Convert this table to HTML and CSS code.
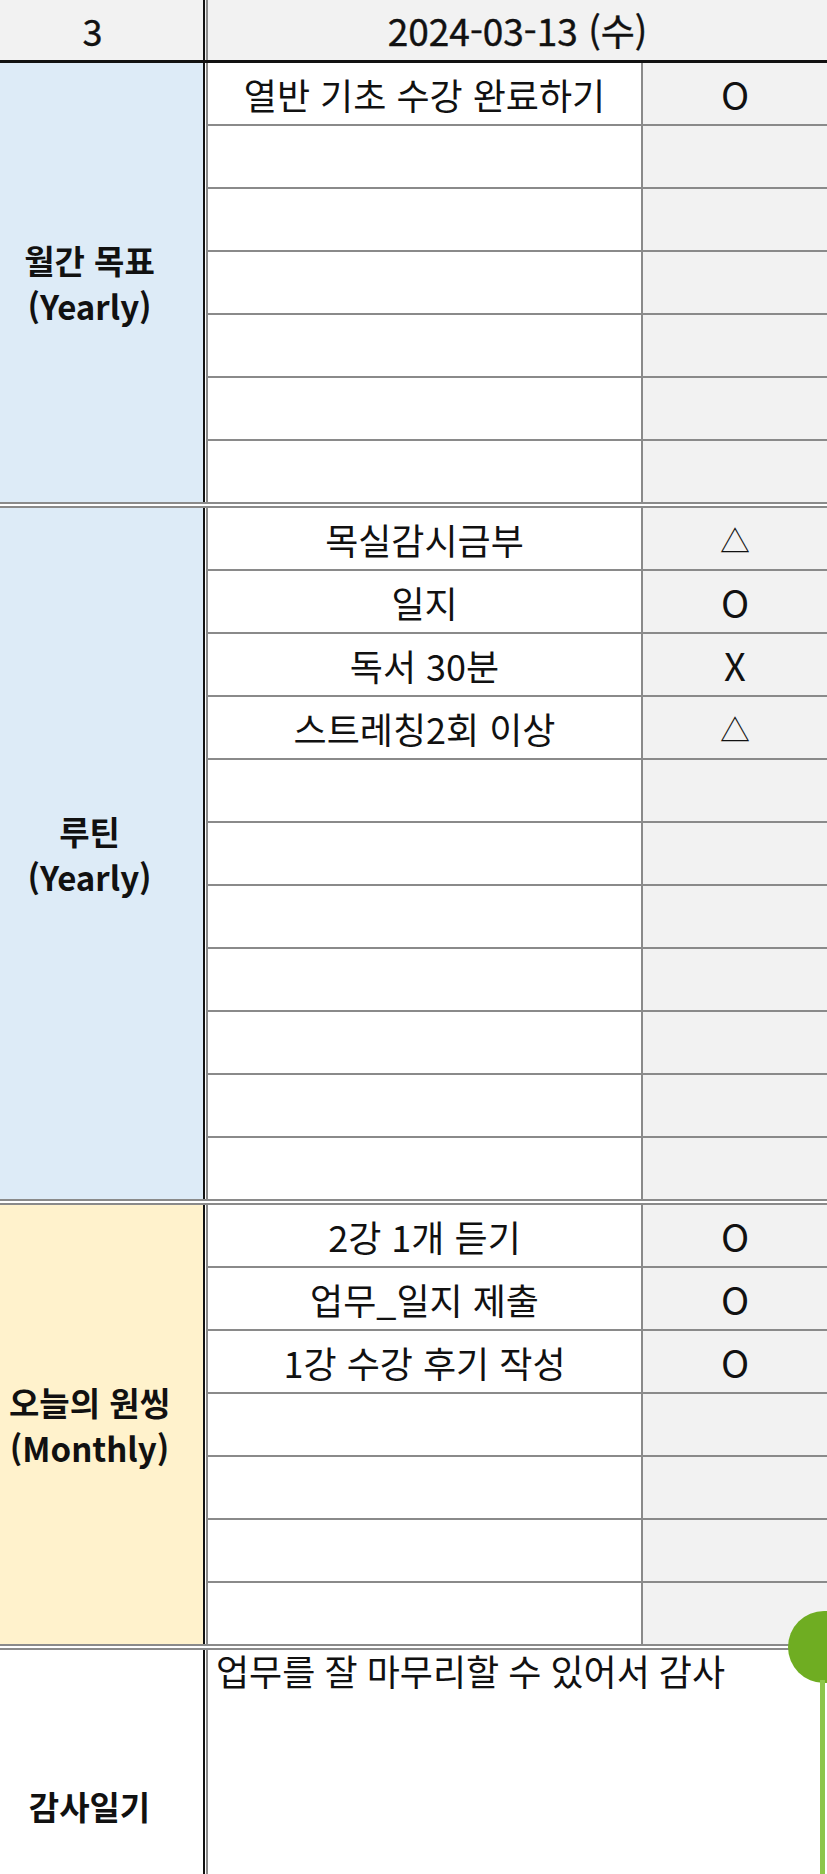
FILE: index.html
```html
<!DOCTYPE html>
<html lang="ko">
<head>
<meta charset="utf-8">
<title>2024-03-13</title>
<link rel="stylesheet" href="styles.css">
</head>
<body>
<div class="sheet">
  <div class="header">
    <div class="label head-label">3</div>
    <div class="date">2024-03-13 (수)</div>
  </div>

  <section class="block blue">
    <div class="label">월간 목표<br>(Yearly)</div>
    <div class="rows">
      <div class="row"><div class="task">열반 기초 수강 완료하기</div><div class="mark">O</div></div>
      <div class="row"><div class="task"></div><div class="mark"></div></div>
      <div class="row"><div class="task"></div><div class="mark"></div></div>
      <div class="row"><div class="task"></div><div class="mark"></div></div>
      <div class="row"><div class="task"></div><div class="mark"></div></div>
      <div class="row"><div class="task"></div><div class="mark"></div></div>
      <div class="row"><div class="task"></div><div class="mark"></div></div>
    </div>
  </section>

  <section class="block blue">
    <div class="label">루틴<br>(Yearly)</div>
    <div class="rows">
      <div class="row"><div class="task">목실감시금부</div><div class="mark tri">△</div></div>
      <div class="row"><div class="task">일지</div><div class="mark">O</div></div>
      <div class="row"><div class="task">독서 30분</div><div class="mark">X</div></div>
      <div class="row"><div class="task">스트레칭2회 이상</div><div class="mark tri">△</div></div>
      <div class="row"><div class="task"></div><div class="mark"></div></div>
      <div class="row"><div class="task"></div><div class="mark"></div></div>
      <div class="row"><div class="task"></div><div class="mark"></div></div>
      <div class="row"><div class="task"></div><div class="mark"></div></div>
      <div class="row"><div class="task"></div><div class="mark"></div></div>
      <div class="row"><div class="task"></div><div class="mark"></div></div>
      <div class="row"><div class="task"></div><div class="mark"></div></div>
    </div>
  </section>

  <section class="block yellow">
    <div class="label">오늘의 원씽<br>(Monthly)</div>
    <div class="rows">
      <div class="row"><div class="task">2강 1개 듣기</div><div class="mark">O</div></div>
      <div class="row"><div class="task">업무_일지 제출</div><div class="mark">O</div></div>
      <div class="row"><div class="task">1강 수강 후기 작성</div><div class="mark">O</div></div>
      <div class="row"><div class="task"></div><div class="mark"></div></div>
      <div class="row"><div class="task"></div><div class="mark"></div></div>
      <div class="row"><div class="task"></div><div class="mark"></div></div>
      <div class="row"><div class="task"></div><div class="mark"></div></div>
    </div>
  </section>

  <section class="block diary">
    <div class="label">감사일기</div>
    <div class="note">업무를 잘 마무리할 수 있어서 감사</div>
  </section>

  <div class="handle-dot"></div>
  <div class="handle-line"></div>
</div>
</body>
</html>
```

FILE: styles.css
```css
* { box-sizing: border-box; }

html, body {
  margin: 0;
  padding: 0;
  background: #ffffff;
}

body {
  font-family: "Noto Sans CJK KR", "Noto Sans", sans-serif;
  color: #111111;
  overflow: hidden;
}

.sheet {
  position: relative;
  width: 827px;
  height: 1874px;
  overflow: hidden;
}

.header {
  display: grid;
  grid-template-columns: 205px 1fr;
  height: 63px;
  background: #f2f2f2;
  border-bottom: 3px solid #111;
}

.label {
  border-right: 2px solid #111;
  display: flex;
  align-items: center;
  justify-content: center;
  text-align: center;
  padding-right: 24px;
  font-size: 33px;
  font-weight: 700;
  line-height: 46px;
  white-space: nowrap;
}

.head-label {
  font-weight: 400;
  font-size: 36px;
  padding-right: 18px;
  -webkit-text-stroke: 0.4px #111;
}

.date {
  margin-left: 1px;
  border-left: 2px solid #8a8a8a;
  display: flex;
  align-items: center;
  justify-content: center;
  font-size: 37px;
  -webkit-text-stroke: 0.4px #111;
}

.block {
  display: grid;
  grid-template-columns: 205px 1fr;
  border-bottom: 6px double #8a8a8a;
}

.blue .label { background: #ddebf7; }
.yellow .label { background: #fff2cc; }

.rows {
  margin-left: 1px;
  border-left: 2px solid #8a8a8a;
  display: flex;
  flex-direction: column;
}

.row {
  display: grid;
  grid-template-columns: 435px 1fr;
  height: 63px;
  border-bottom: 2px solid #8a8a8a;
  font-size: 36px;
}

.row:last-child {
  height: 61px;
  border-bottom: none;
}

.task {
  border-right: 2px solid #8a8a8a;
  display: flex;
  align-items: center;
  justify-content: center;
  background: #ffffff;
  white-space: nowrap;
}

.mark {
  display: flex;
  align-items: center;
  justify-content: center;
  background: #f2f2f2;
  font-size: 38px;
}

.mark.tri {
  font-size: 30px;
}

.diary {
  height: 312px;
  border-bottom: none;
}

.diary .label {
  background: #ffffff;
}

.note {
  margin-left: 1px;
  border-left: 2px solid #8a8a8a;
  padding: 0 0 0 8px;
  font-size: 36px;
  line-height: 40px;
  word-spacing: -1px;
  white-space: nowrap;
}

.handle-dot {
  position: absolute;
  left: 788px;
  top: 1611px;
  width: 72px;
  height: 72px;
  border-radius: 50%;
  background: #6fad22;
}

.handle-line {
  position: absolute;
  left: 820px;
  top: 1680px;
  width: 5px;
  height: 200px;
  background: #8dc64a;
}
```
